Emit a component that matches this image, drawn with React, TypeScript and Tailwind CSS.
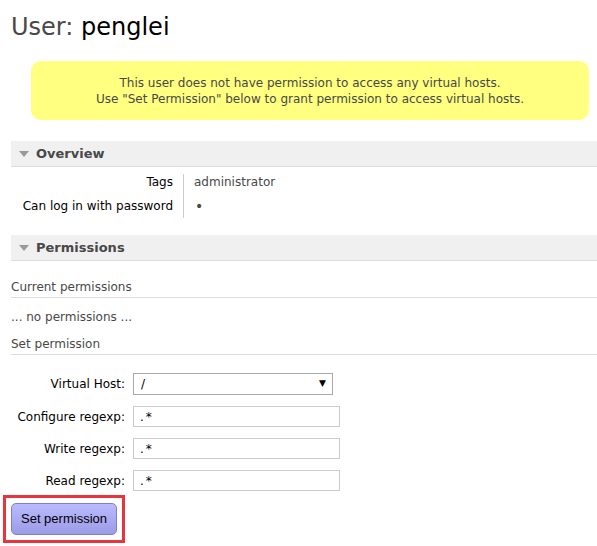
export default function App() {
  const font = { fontFamily: '"DejaVu Sans", Verdana, sans-serif' }
  return (
    <div className="min-h-screen bg-white pl-[11px] text-[12px] text-[#484848]" style={font}>
      {/* Title */}
      <h1 className="pt-[12px] text-[24px] leading-[30px] font-normal text-[#484848]">
        User: <span className="text-black">penglei</span>
      </h1>

      {/* Warning box */}
      <div className="ml-[20px] mr-[8px] mt-[19px] flex h-[59px] flex-col items-center justify-center rounded-[10px] bg-[#ffff80] text-center leading-[16px] text-[#484848]">
        <p>This user does not have permission to access any virtual hosts.</p>
        <p>Use "Set Permission" below to grant permission to access virtual hosts.</p>
      </div>

      {/* Overview */}
      <div className="mt-[21px] flex h-[26px] items-center border-b border-[#dddddd] bg-[#f0f0f0] pl-[8px]">
        <span className="mr-[7px] h-0 w-0 border-x-[5px] border-t-[6px] border-x-transparent border-t-[#999999]" />
        <span className="text-[13px] font-bold text-[#484848]">Overview</span>
      </div>
      <div className="mt-[3px] flex">
        <div className="flex w-[172px] flex-col items-end pr-[10px] leading-[24px] text-black">
          <span>Tags</span>
          <span>Can log in with password</span>
        </div>
        <div className="my-[4px] flex flex-col border-l border-[#cccccc] pl-[10px] leading-[24px] text-[#484848]">
          <span className="-mt-[4px]">administrator</span>
          <span className="pl-[1px] text-[14px]">•</span>
        </div>
      </div>

      {/* Permissions */}
      <div className="mt-[13px] flex h-[26px] items-center border-b border-[#dddddd] bg-[#f0f0f0] pl-[8px]">
        <span className="mr-[7px] h-0 w-0 border-x-[5px] border-t-[6px] border-x-transparent border-t-[#999999]" />
        <span className="text-[13px] font-bold text-[#484848]">Permissions</span>
      </div>

      <div className="mt-[18px] border-b border-[#dcdcdc] pb-[2px] leading-[16px]">Current permissions</div>
      <div className="mt-[11px] leading-[16px]">... no permissions ...</div>
      <div className="mt-[11px] border-b border-[#dcdcdc] pb-[2px] leading-[16px]">Set permission</div>

      {/* Form */}
      <div className="mt-[18px] flex flex-col gap-[11px] text-black">
        <div className="flex items-center">
          <label className="w-[114px] text-right">Virtual Host:</label>
          <div className="ml-[8px] flex h-[22px] w-[200px] items-center justify-between border border-[#a9a9a9] bg-white pl-[7px] pr-[6px]">
            <span>/</span>
            <span className="text-[9px]">▼</span>
          </div>
        </div>
        {[
          ["Configure regexp:", ".*"],
          ["Write regexp:", ".*"],
          ["Read regexp:", ".*"],
        ].map(([label, value]) => (
          <div key={label} className="flex items-center">
            <label className="w-[114px] text-right">{label}</label>
            <div className="ml-[8px] flex h-[21px] w-[207px] items-center border border-[#cccccc] bg-white pl-[6px] tracking-[2px]">
              {value}
            </div>
          </div>
        ))}
      </div>

      {/* Button */}
      <div className="ml-[-8px] mt-[4px] inline-block border-[3px] border-[#e8343c] px-[5px] py-[5px]">
        <button
          className="h-[32px] w-[106px] rounded-[5px] border border-[#8080d0] bg-gradient-to-b from-[#babaff] to-[#9c9ce6] text-[13px] text-black"
          style={{ fontFamily: '"Liberation Sans", Arial, sans-serif' }}
        >
          Set permission
        </button>
      </div>
    </div>
  )
}
